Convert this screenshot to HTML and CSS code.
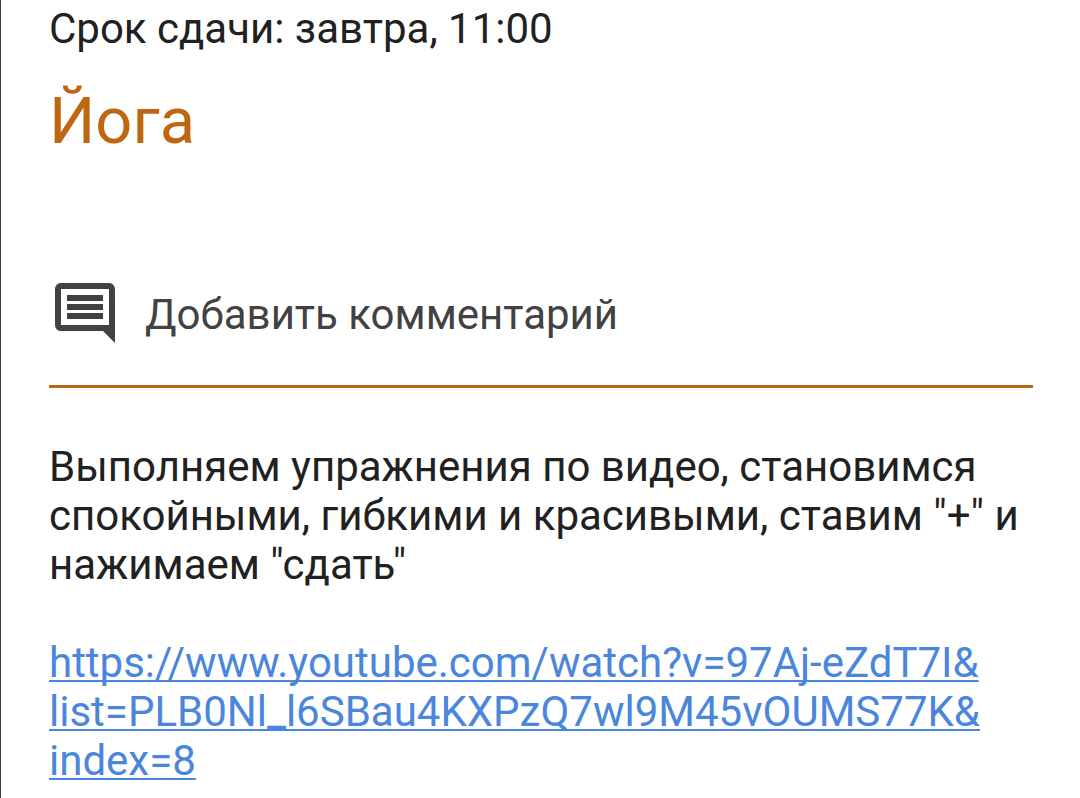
FILE: index.html
```html
<!DOCTYPE html>
<html lang="ru">
<head>
<meta charset="utf-8">
<meta name="viewport" content="width=device-width, initial-scale=1">
<title>Йога</title>
<link rel="stylesheet" href="styles.css">
</head>
<body>
<main class="assignment">
  <p class="due">Срок сдачи: завтра, 11:00</p>
  <h1 class="title">Йога</h1>
  <button class="comment" type="button">
    <svg class="comment-icon" viewBox="0 0 24 24" aria-hidden="true"><path fill="currentColor" d="M21.990 4c0-1.100-.890-2-1.990-2H4c-1.100 0-2 .9-2 2v12c0 1.100.9 2 2 2h14l4 4-.01-18zM20 4v12H4V4h16zM6 12h12v2H6zm0-3h12v2H6zm0-3h12v2H6z"/></svg>
    <span class="comment-label">Добавить комментарий</span>
  </button>
  <hr class="divider">
  <p class="description">Выполняем упражнения по видео, становимся спокойными, гибкими и красивыми, ставим "+" и нажимаем "сдать"</p>
  <a class="link" href="https://www.youtube.com/watch?v=97Aj-eZdT7I&amp;list=PLB0Nl_l6SBau4KXPzQ7wl9M45vOUMS77K&amp;index=8">https://www.youtube.com/watch?v=97Aj-eZdT7I&amp;<wbr>list=PLB0Nl_l6SBau4KXPzQ7wl9M45vOUMS77K&amp;<wbr>index=8</a>
</main>
</body>
</html>
```
FILE: styles.css
```css
* { box-sizing: border-box; }
body {
  margin: 0;
  background: #fff;
  color: #212121;
  font: 42px/49px Roboto, sans-serif;
}
.assignment {
  min-height: 100vh;
  padding: 4px 47px 12px 48px;
  border-left: 1px solid #3c3c3c;
}
.due, .title, .description { margin: 0; }
.title {
  margin-top: 28px;
  color: #be6710;
  font: 400 65px/80px Roboto, sans-serif;
}
.comment {
  display: flex;
  align-items: center;
  gap: 24px;
  margin-top: 116px;
  padding: 0;
  border: 0;
  background: none;
  color: #424242;
  font: inherit;
}
.comment-icon { width: 72px; height: 72px; }
.comment-label { padding-top: 2px; }
.divider {
  height: 3px;
  margin: 36px 0 54px;
  border: 0;
  background: #b8690f;
}
.link {
  display: block;
  margin-top: 49px;
  color: #4a86dc;
  text-decoration-thickness: 2px;
  text-decoration-skip-ink: none;
  text-underline-offset: 3px;
}
```
